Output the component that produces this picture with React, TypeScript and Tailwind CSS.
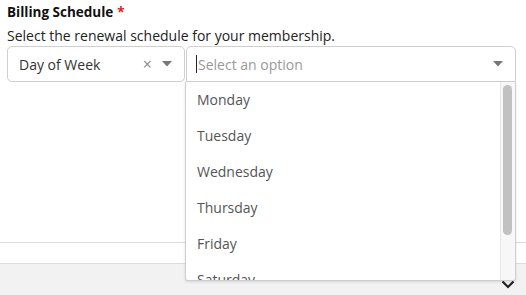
import React from 'react';

const days = ['Monday', 'Tuesday', 'Wednesday', 'Thursday', 'Friday', 'Saturday', 'Sunday'];

const Caret = () => (
  <svg width="10" height="6" viewBox="0 0 10 6" className="shrink-0">
    <path d="M0 0 L10 0 L5 5.5 Z" fill="#777" />
  </svg>
);

const App = () => {
  return (
    <div
      className="relative h-[295px] w-[526px] overflow-hidden bg-white text-[14px]"
      style={{ fontFamily: '"Open Sans", "Liberation Sans", sans-serif' }}
    >
      {/* Field */}
      <div className="px-[7px] pt-[2px]">
        <div className="flex h-[20px] items-center text-[13.5px] font-bold leading-[20px] text-[#111]">
          Billing Schedule <span className="ml-[4px] text-[#e02020]">*</span>
        </div>
        <div className="mt-[4px] h-[20px] leading-[20px] text-[#222]">
          Select the renewal schedule for your membership.
        </div>
        <div className="flex h-[36px]">
          <div className="flex w-[178px] items-center rounded-[5px] border border-[#cfcfcf] pl-[11px] pr-[12px]">
            <span className="flex-1 text-[#333]">Day of Week</span>
            <span className="mr-[10px] text-[16px] leading-none text-[#888]">×</span>
            <Caret />
          </div>
          <div className="ml-[1px] flex w-[330px] items-center rounded-t-[5px] border border-[#cfcfcf] pl-[9px] pr-[12px]">
            <span className="mr-[1px] h-[18px] w-[1px] bg-[#222]" />
            <span className="flex-1 text-[#999]">Select an option</span>
            <Caret />
          </div>
        </div>
      </div>

      {/* Page chrome below */}
      <div className="mt-[160px] h-[1px] bg-[#dcdcdc]" />
      <div className="mt-[20px] h-[32px] border-t border-[#dcdcdc] bg-[#f2f2f2]" />
      <svg
        width="14"
        height="9"
        viewBox="0 0 14 9"
        className="absolute left-[501px] top-[280px]"
      >
        <path d="M1.5 1.5 L7 7 L12.5 1.5" stroke="#222" strokeWidth="2.2" fill="none" />
      </svg>

      {/* Open dropdown */}
      <div className="absolute left-[185px] top-[82px] flex h-[199px] w-[331px] overflow-hidden rounded-b-[3px] border border-t-0 border-[#cfcfcf] bg-white shadow-sm">
        <div className="-mt-[1px] flex-1">
          {days.map((d) => (
            <div key={d} className="flex h-[36px] items-center pl-[11px] text-[#555]">
              {d}
            </div>
          ))}
        </div>
        <div className="w-[15px] border-l border-[#e8e8e8] bg-[#f7f7f7] pt-[3px] pl-[2px]">
          <div className="h-[150px] w-[9px] rounded-full bg-[#c1c1c1]" />
        </div>
      </div>
    </div>
  );
};

export default App;
